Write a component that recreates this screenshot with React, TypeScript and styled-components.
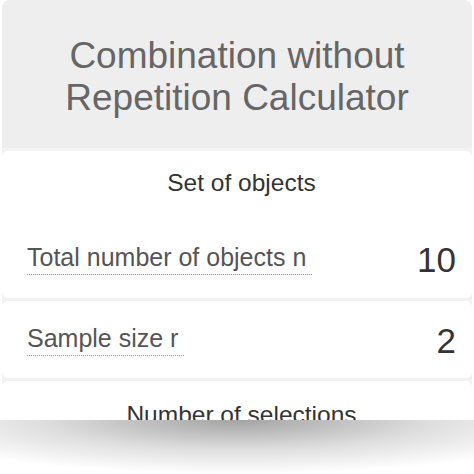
import styled, { createGlobalStyle } from "styled-components";

const Global = createGlobalStyle`
  html, body {
    margin: 0;
    padding: 0;
    background: #ffffff;
  }
  body {
    font-family: "Liberation Sans", Arial, sans-serif;
  }
`;

const Page = styled.div`
  width: 474px;
  height: 474px;
  overflow: hidden;
  display: flex;
  flex-direction: column;
  background: #ffffff;
`;

const Card = styled.div`
  flex: 0 0 420px;
  overflow: hidden;
  margin: 0 2px;
  display: flex;
  flex-direction: column;
  gap: 3px;
  background: #f2f2f2;
  border-radius: 8px 8px 0 0;
`;

const Header = styled.div`
  flex: 0 0 148px;
  box-sizing: border-box;
  padding-top: 35px;
  display: flex;
  justify-content: center;
  background: #eeeeee;
  border-radius: 8px 8px 0 0;
`;

const Title = styled.h1`
  margin: 0;
  text-align: center;
  font-weight: 400;
  font-size: 37px;
  line-height: 42px;
  color: #666666;
`;

const Section = styled.section<{ $h?: number }>`
  flex: 0 0 ${(p) => (p.$h ? `${p.$h}px` : "auto")};
  box-sizing: border-box;
  background: #ffffff;
  border-radius: 6px;
  padding: 0 16px 0 25px;
  display: flex;
  flex-direction: column;
`;

const SectionTitle = styled.div<{ $pt: number }>`
  text-align: center;
  font-size: 24.5px;
  line-height: 24px;
  color: #333333;
  padding-top: ${(p) => p.$pt}px;
`;

const Row = styled.div<{ $pt: number }>`
  display: flex;
  align-items: flex-end;
  justify-content: space-between;
  padding-top: ${(p) => p.$pt}px;
`;

const Label = styled.span`
  font-size: 25px;
  line-height: 25px;
  color: #555555;
  padding: 0 6px 4px 0;
  border-bottom: 1px dotted #9a9a9a;
`;

const Value = styled.span`
  font-size: 35px;
  line-height: 35px;
  color: #333333;
  margin-bottom: -2px;
`;

const Shadow = styled.div`
  flex: 1;
  background: radial-gradient(
    ellipse 75% 100% at 50% 0%,
    rgba(0, 0, 0, 0.36) 0%,
    rgba(0, 0, 0, 0.13) 55%,
    rgba(0, 0, 0, 0) 100%
  );
`;

export default function App() {
  return (
    <>
      <Global />
      <Page>
        <Card>
          <Header>
            <Title>
              Combination without
              <br />
              Repetition Calculator
            </Title>
          </Header>
          <Section $h={147}>
            <SectionTitle $pt={20}>Set of objects</SectionTitle>
            <Row $pt={47}>
              <Label>Total number of objects n</Label>
              <Value>10</Value>
            </Row>
          </Section>
          <Section $h={77}>
            <Row $pt={22}>
              <Label>Sample size r</Label>
              <Value>2</Value>
            </Row>
          </Section>
          <Section>
            <SectionTitle $pt={22}>Number of selections</SectionTitle>
          </Section>
        </Card>
        <Shadow />
      </Page>
    </>
  );
}
